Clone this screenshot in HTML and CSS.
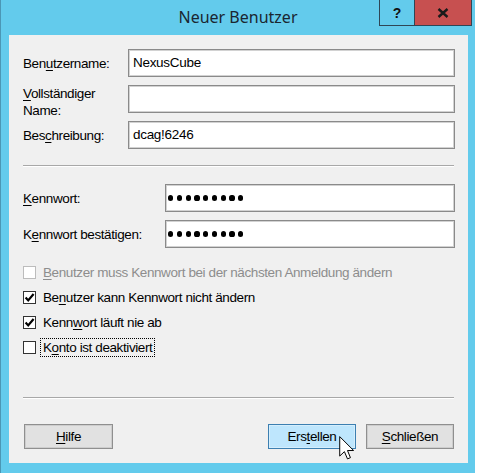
FILE: index.html
```html
<!DOCTYPE html>
<html lang="de">
<head>
<meta charset="utf-8">
<title>Neuer Benutzer</title>
<link rel="stylesheet" href="styles.css">
</head>
<body>
<div class="window">
  <div class="titlebar">
    <span class="title">Neuer Benutzer</span>
    <div class="caption-btns">
      <div class="cap-btn help">?</div>
      <div class="cap-btn close">
        <svg width="12" height="10" viewBox="0 0 12 10"><path d="M1.5 1 L10.5 9 M10.5 1 L1.5 9" stroke="#1a1a1a" stroke-width="2.4" fill="none"/></svg>
      </div>
    </div>
  </div>
  <div class="panel">
    <div class="grid grid-top">
      <label class="lbl">Ben<u>u</u>tzername:</label>
      <div class="field">NexusCube</div>
      <label class="lbl lbl-two"><u>V</u>ollständiger<br>Name:</label>
      <div class="field"></div>
      <label class="lbl">Bes<u>c</u>hreibung:</label>
      <div class="field">dcag!6246</div>
    </div>
    <div class="sep sep-1"></div>
    <div class="grid grid-pw">
      <label class="lbl"><u>K</u>ennwort:</label>
      <div class="field dots"><i></i><i></i><i></i><i></i><i></i><i></i><i></i><i></i><i></i></div>
      <label class="lbl">K<u>e</u>nnwort bestätigen:</label>
      <div class="field dots"><i></i><i></i><i></i><i></i><i></i><i></i><i></i><i></i><i></i></div>
    </div>
    <div class="checks">
      <div class="check disabled"><span class="box"></span><span class="ctext"><u>B</u>enutzer muss Kennwort bei der nächsten Anmeldung ändern</span></div>
      <div class="check"><span class="box"><svg width="11" height="11" viewBox="0 0 11 11"><path d="M1.6 5.6 L4.2 8.4 L9.6 2" stroke="#000" stroke-width="2.2" fill="none"/></svg></span><span class="ctext">Be<u>n</u>utzer kann Kennwort nicht ändern</span></div>
      <div class="check"><span class="box"><svg width="11" height="11" viewBox="0 0 11 11"><path d="M1.6 5.6 L4.2 8.4 L9.6 2" stroke="#000" stroke-width="2.2" fill="none"/></svg></span><span class="ctext">Kenn<u>w</u>ort läuft nie ab</span></div>
      <div class="check"><span class="box"></span><span class="ctext focus">K<u>o</u>nto ist deaktiviert</span></div>
    </div>
    <div class="sep sep-2"></div>
    <div class="buttons">
      <div class="btn"><u>H</u>ilfe</div>
      <div class="spacer"></div>
      <div class="btn hover">Ers<u>t</u>ellen</div>
      <div class="btn"><u>S</u>chließen</div>
    </div>
  </div>
  <svg class="cursor" width="15" height="24" viewBox="0 0 12 19.5"><path d="M0.5 0.5 V16.3 L4.3 12.7 L6.8 18.6 L9.2 17.6 L6.8 11.8 H11.8 Z" fill="#fff" stroke="#000" stroke-width="0.8" stroke-linejoin="miter"/></svg>
</div>
</body>
</html>
```
FILE: styles.css
```css
html, body {
  margin: 0;
  padding: 0;
  background: #ffffff;
}
body {
  width: 477px;
  height: 473px;
  overflow: hidden;
  font-family: "Liberation Sans", Arial, sans-serif;
  font-size: 13px;
  color: #000;
}
.window {
  position: relative;
  width: 475px;
  height: 480px;
  box-sizing: border-box;
  background: #63cbec;
  border-left: 1px solid #4b97b5;
}
.titlebar {
  height: 35px;
  display: flex;
  justify-content: center;
  align-items: flex-start;
}
.title {
  font-family: "Noto Sans", "Open Sans", sans-serif;
  font-size: 16px;
  color: #1a2631;
  margin-top: 6px;
  line-height: 22px;
}
.caption-btns {
  position: absolute;
  top: -1px;
  left: 378px;
  display: flex;
  border: 1px solid #2f4656;
  height: 25px;
}
.cap-btn {
  height: 25px;
  display: flex;
  align-items: center;
  justify-content: center;
}
.cap-btn.help {
  width: 34px;
  border-right: 1px solid #2f4656;
  font-family: "Liberation Sans", Arial, sans-serif;
  font-weight: bold;
  font-size: 14px;
  color: #111;
}
.cap-btn.close {
  width: 56px;
  background: #c75050;
}
.panel {
  margin-left: 8px;
  width: 459px;
  height: 428px;
  box-sizing: border-box;
  background: #f0f0f0;
  padding: 14px 14px 0 14px;
  display: flex;
  flex-direction: column;
}
.grid {
  display: grid;
  row-gap: 8px;
  grid-auto-rows: 28px;
  align-items: center;
}
.grid-top {
  grid-template-columns: 105px 327px;
}
.grid-pw {
  grid-template-columns: 142px 290px;
  margin-top: 17px;
}
.lbl {
  font-size: 13.5px;
  letter-spacing: -0.4px;
  line-height: 17px;
}
.lbl-two {
  align-self: start;
  margin-top: 0px;
}
.lbl u, .ctext u, .btn u {
  text-decoration-thickness: 1px;
  text-underline-offset: 2px;
}
.field {
  height: 28px;
  box-sizing: border-box;
  background: #fff;
  border: 1px solid #8a8a8a;
  box-shadow: inset 0 0 0 1px #d2d2d2;
  padding: 0 4px;
  line-height: 24px;
  letter-spacing: -0.3px;
  font-size: 13.5px;
  display: flex;
  align-items: center;
}
.dots {
  gap: 3.6px;
  padding-left: 2px;
}
.dots i {
  display: block;
  width: 5.2px;
  height: 5.2px;
  border-radius: 50%;
  background: #000;
}
.sep {
  height: 0;
  border-top: 1px solid #a8a8a8;
  border-bottom: 1px solid #ffffff;
}
.sep-1 {
  margin-top: 16px;
}
.sep-2 {
  margin-top: 37px;
}
.checks {
  margin-top: 12px;
  display: flex;
  flex-direction: column;
}
.check {
  height: 25px;
  display: flex;
  align-items: center;
}
.box {
  width: 13px;
  height: 13px;
  box-sizing: border-box;
  border: 1px solid #333;
  background: #fff;
  display: flex;
  align-items: center;
  justify-content: center;
  margin-right: 4px;
}
.check.disabled .box {
  border-color: #bcbcbc;
}
.check.disabled .ctext {
  color: #8d8d8d;
}
.ctext {
  font-size: 13.5px;
  letter-spacing: -0.4px;
  padding: 0 2px;
  line-height: 17px;
  border: 1px dotted transparent;
}
.ctext.focus {
  border-color: #000;
}
.buttons {
  margin-top: 25px;
  display: flex;
  gap: 10px;
  padding-left: 1px;
}
.spacer {
  flex: 1;
}
.btn {
  width: 88px;
  height: 25px;
  box-sizing: border-box;
  background: #e1e1e1;
  border: 1px solid #8f8f8f;
  box-shadow: inset 0 0 0 1px #cdcdcd;
  display: flex;
  align-items: center;
  justify-content: center;
  font-size: 13.5px;
  letter-spacing: -0.4px;
}
.btn:first-child {
  width: 89px;
}
.btn.hover {
  background: #bee6fd;
  border-color: #3c7fb1;
  box-shadow: inset 0 0 0 1px #d5eefc;
}
.cursor {
  position: absolute;
  left: 338px;
  top: 436px;
}
```
